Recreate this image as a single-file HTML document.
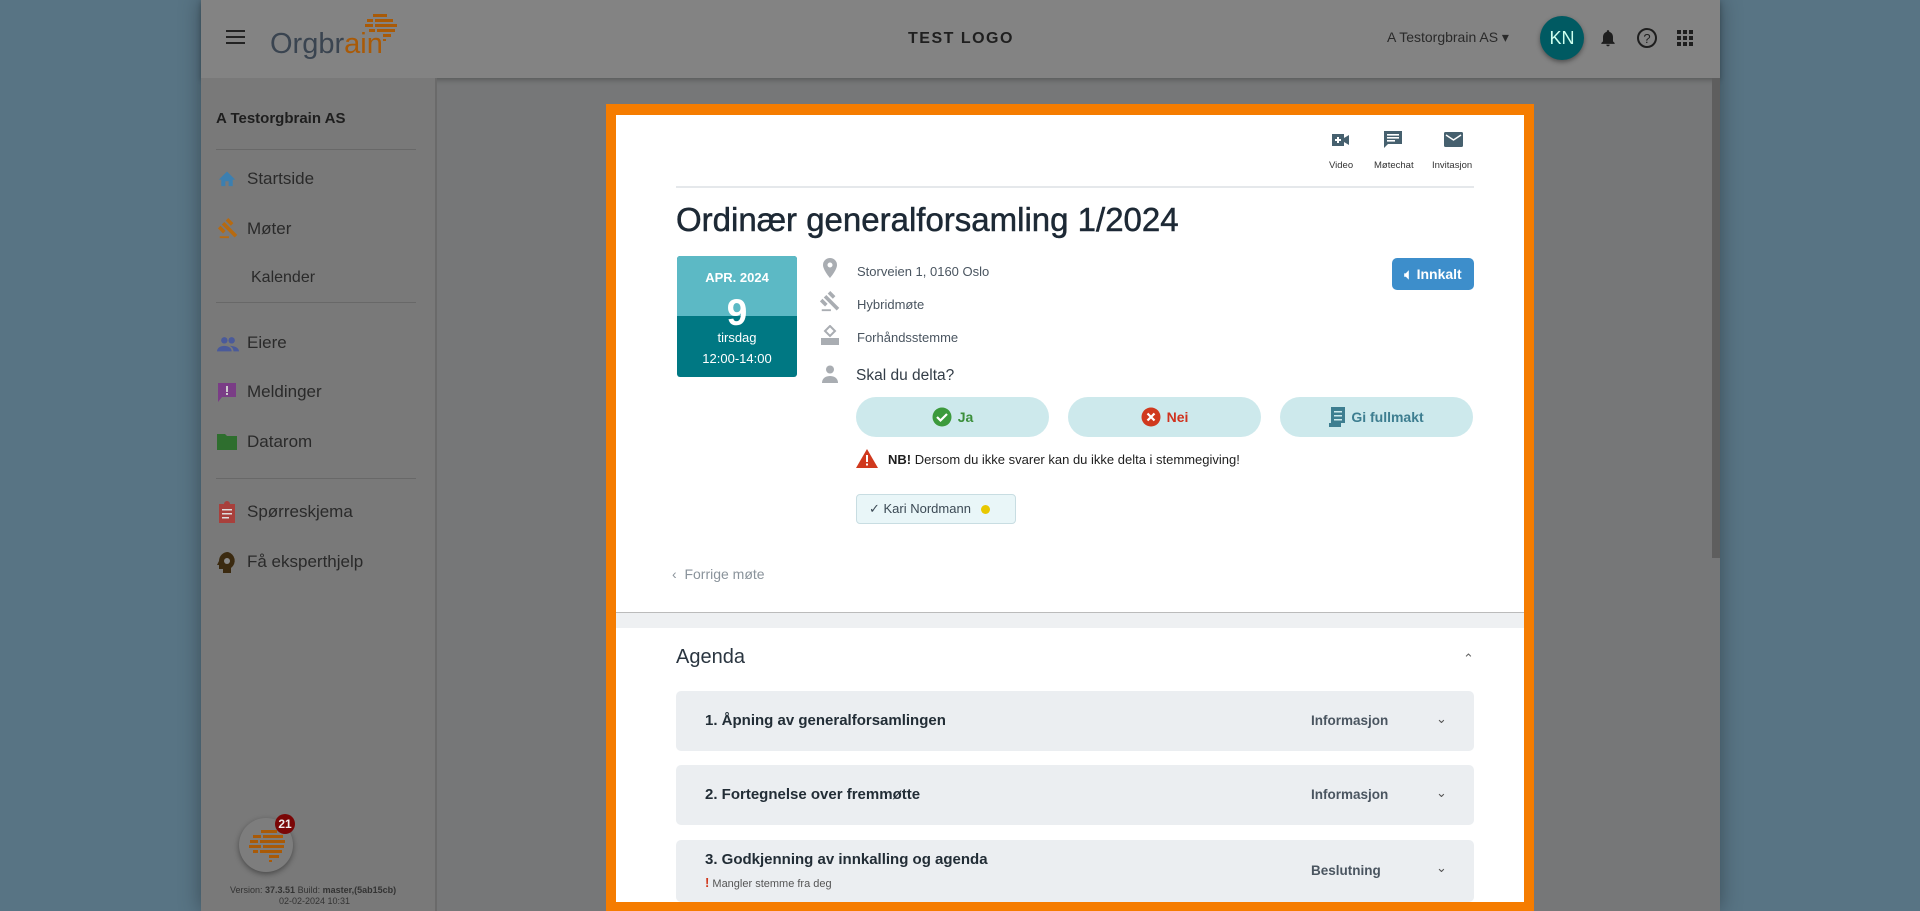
<!DOCTYPE html>
<html><head><meta charset="utf-8"><style>
*{box-sizing:border-box;margin:0;padding:0}
body{width:1920px;height:911px;overflow:hidden;background:#587484;font-family:"Liberation Sans",Arial,sans-serif;position:relative}
.abs{position:absolute}
#app{left:201px;top:0;width:1519px;height:911px;background:#767778;box-shadow:0 0 20px rgba(0,0,0,.35)}
#hdr{left:201px;top:0;width:1519px;height:78px;background:#838383;box-shadow:0 2px 5px rgba(0,0,0,.25)}
#side{left:201px;top:78px;width:236px;height:833px;background:#797979;border-right:2px solid #6a6a6a}
.si{position:absolute;left:46px;font-size:17px;color:#2a2a2a}
.ic{position:absolute;left:16px}
.dv{position:absolute;left:15px;width:200px;height:1px;background:#686868}
#frame{left:606px;top:104px;width:928px;height:807px;background:#f57c00}
#white{left:616px;top:115px;width:908px;height:787px;background:#fff}
.t{position:absolute;white-space:nowrap}
.btn{position:absolute;top:397px;height:40px;width:193px;border-radius:20px;background:#cde9ec;font-size:14px;font-weight:bold;display:flex;align-items:center;justify-content:center;gap:6px}
.ag{position:absolute;left:676px;width:798px;height:60px;background:#ebeef1;border-radius:5px}
.ag .n{position:absolute;left:29px;font-size:15px;font-weight:bold;color:#222d36}
.ag .k{position:absolute;left:635px;font-size:13.5px;font-weight:bold;color:#4a5560}
.ag .c{position:absolute;left:760px;font-size:13px;color:#555}
</style></head><body>
<div id="app" class="abs"></div>
<div id="hdr" class="abs">
 <div class="abs" style="left:25px;top:30px;width:19px;height:2px;background:#222;box-shadow:0 6px 0 #222,0 12px 0 #222"></div>
 <div class="t" style="left:69px;top:28px;font-size:29px;color:#3a4450">Orgbr<span style="color:#a95a07">ain</span></div>
 <svg class="abs" style="left:162px;top:12px" width="36" height="30"><g fill="#a95a07"><rect x="10" y="2" width="14" height="3"/><rect x="4" y="7" width="6" height="3"/><rect x="12" y="7" width="18" height="3"/><rect x="2" y="12" width="8" height="3"/><rect x="12" y="12" width="22" height="3"/><rect x="6" y="17" width="6" height="3"/><rect x="14" y="17" width="18" height="3"/><rect x="20" y="22" width="8" height="3"/><rect x="20" y="27" width="3" height="2"/></g></svg>
 <div class="t" style="left:707px;top:30px;font-size:16px;font-weight:bold;letter-spacing:1.5px;color:#1f1f1f">TEST LOGO</div>
 <div class="t" style="left:1186px;top:29px;font-size:14px;color:#2a2a2a">A Testorgbrain AS ▾</div>
 <div class="abs" style="left:1339px;top:16px;width:44px;height:44px;border-radius:50%;background:#005a62;color:#cfe;font-size:18px;display:flex;align-items:center;justify-content:center;box-shadow:0 2px 5px rgba(0,0,0,.4)">KN</div>
 <svg class="abs" style="left:1397px;top:27px" width="20" height="22" viewBox="0 0 24 24"><path fill="#1e1e1e" d="M12 22a2 2 0 0 0 2-2h-4a2 2 0 0 0 2 2zm6-6V11c0-3-1.6-5.6-4.5-6.3V4a1.5 1.5 0 0 0-3 0v.7C7.6 5.4 6 8 6 11v5l-2 2v1h16v-1z"/></svg>
 <svg class="abs" style="left:1434px;top:26px" width="24" height="24" viewBox="0 0 24 24"><circle cx="12" cy="12" r="9" fill="none" stroke="#1e1e1e" stroke-width="2"/><text x="12" y="17" font-size="13" text-anchor="middle" fill="#1e1e1e" font-family="Liberation Sans">?</text></svg>
 <svg class="abs" style="left:1476px;top:30px" width="17" height="17"><g fill="#1e1e1e"><rect x="0" y="0" width="4" height="4"/><rect x="6" y="0" width="4" height="4"/><rect x="12" y="0" width="4" height="4"/><rect x="0" y="6" width="4" height="4"/><rect x="6" y="6" width="4" height="4"/><rect x="12" y="6" width="4" height="4"/><rect x="0" y="12" width="4" height="4"/><rect x="6" y="12" width="4" height="4"/><rect x="12" y="12" width="4" height="4"/></g></svg>
</div>
<div class="abs" style="left:1712px;top:78px;width:8px;height:480px;background:#5e5e5e"></div>
<div id="side" class="abs">
 <div class="t" style="left:15px;top:32px;font-size:15px;font-weight:bold;color:#1e1e1e">A Testorgbrain AS</div>
 <div class="dv" style="top:71px"></div>
 <svg class="ic" style="top:91px" width="20" height="18" viewBox="0 0 24 22"><path fill="#3c7fb0" d="M10 21v-6h4v6h5v-8h3L12 3 2 13h3v8z"/></svg><div class="si" style="top:91px">Startside</div>
 <svg class="ic" style="top:139px" width="22" height="22" viewBox="0 0 24 24"><path fill="#b76a10" d="M3 21h10v2H3zM5.2 8.2l2.8-2.8 14.1 14.1-2.8 2.8zM12.3 1.1l5.6 5.6-2.8 2.8-5.6-5.6zM3.8 9.6l5.6 5.6-2.8 2.8L1 12.4z"/></svg><div class="si" style="top:141px">Møter</div>
 <div class="si" style="top:191px;left:50px;font-size:16px">Kalender</div>
 <div class="dv" style="top:224px"></div>
 <svg class="ic" style="top:258px" width="22" height="16" viewBox="0 0 24 16"><g fill="#4a5a9a"><circle cx="8" cy="4" r="3.5"/><circle cx="16" cy="4" r="3.5"/><path d="M0 16c0-4 4-6 8-6s8 2 8 6zM14 10c3 0 10 1 10 6h-6c0-3-2-5-4-6z"/></g></svg><div class="si" style="top:255px">Eiere</div>
 <svg class="ic" style="top:304px" width="20" height="21" viewBox="0 0 20 21"><path fill="#7a3d86" d="M1 1h18v14H5l-4 5z"/><rect x="9" y="4" width="2" height="6" fill="#ccc"/><rect x="9" y="11" width="2" height="2" fill="#ccc"/></svg><div class="si" style="top:304px">Meldinger</div>
 <svg class="ic" style="top:356px" width="20" height="16" viewBox="0 0 20 16"><path fill="#2e6e2e" d="M0 0h8l2 2h10v14H0z"/></svg><div class="si" style="top:354px">Datarom</div>
 <div class="dv" style="top:400px"></div>
 <svg class="ic" style="top:423px" width="20" height="22" viewBox="0 0 20 22"><path fill="#a8403c" d="M2 3h5a3 3 0 0 1 6 0h5v19H2z"/><g fill="#ddd"><rect x="5" y="8" width="10" height="1.5"/><rect x="5" y="12" width="10" height="1.5"/><rect x="5" y="16" width="7" height="1.5"/></g></svg><div class="si" style="top:424px">Spørreskjema</div>
 <svg class="ic" style="top:473px" width="22" height="22" viewBox="0 0 22 22"><path fill="#3b2a10" d="M11 1a9 9 0 0 0-9 9l-2 4h2v4h4v4h8v-5a9 9 0 0 0-3-16z"/><circle cx="10" cy="10" r="3" fill="#888"/></svg><div class="si" style="top:474px">Få eksperthjelp</div>
 <div class="abs" style="left:38px;top:740px;width:54px;height:54px;border-radius:50%;background:#7d7d7d;box-shadow:0 2px 6px rgba(0,0,0,.4)">
  <svg class="abs" style="left:8px;top:10px" width="40" height="36"><g fill="#a95a07"><rect x="14" y="2" width="16" height="3"/><rect x="6" y="7" width="8" height="3"/><rect x="16" y="7" width="20" height="3"/><rect x="3" y="12" width="8" height="3"/><rect x="13" y="12" width="25" height="3"/><rect x="2" y="17" width="12" height="3"/><rect x="16" y="17" width="21" height="3"/><rect x="6" y="22" width="5" height="3"/><rect x="13" y="22" width="22" height="3"/><rect x="22" y="27" width="10" height="3"/><rect x="22" y="32" width="3" height="2"/></g></svg>
 </div>
 <div class="abs" style="left:74px;top:736px;width:20px;height:20px;border-radius:50%;background:#7a0606;color:#eee;font-size:12px;font-weight:bold;text-align:center;line-height:20px">21</div>
 <div class="t" style="left:29px;top:807px;font-size:9px;color:#333">Version: <b>37.3.51</b> Build: <b>master,(5ab15cb)</b></div>
 <div class="t" style="left:78px;top:818px;font-size:9px;color:#333">02-02-2024 10:31</div>
</div>
<div id="frame" class="abs"></div>
<div id="white" class="abs"></div>
<div class="abs" style="left:616px;top:612px;width:908px;height:16px;background:#eef0f2;border-top:1px solid #bbb"></div>
<svg class="abs" style="left:1332px;top:133px" width="18" height="14" viewBox="0 0 18 14"><path fill="#46606e" d="M0 1h12v4l5-3v10l-5-3v4H0z"/><path fill="#fff" d="M5 4h2v2h2v2H7v2H5V8H3V6h2z"/></svg>
<svg class="abs" style="left:1384px;top:131px" width="18" height="18" viewBox="0 0 18 18"><path fill="#46606e" d="M0 0h18v13H4l-4 4z"/><g fill="#fff"><rect x="3" y="3" width="12" height="1.6"/><rect x="3" y="6" width="12" height="1.6"/><rect x="3" y="9" width="8" height="1.6"/></g></svg>
<svg class="abs" style="left:1444px;top:132px" width="19" height="15" viewBox="0 0 19 15"><rect width="19" height="15" rx="1.5" fill="#46606e"/><path d="M2 3l7.5 5L17 3" fill="none" stroke="#fff" stroke-width="1.5"/></svg>
<div class="t" style="left:1329px;top:160px;font-size:9.5px;color:#333">Video</div>
<div class="t" style="left:1374px;top:160px;font-size:9.5px;color:#333">Møtechat</div>
<div class="t" style="left:1432px;top:160px;font-size:9.5px;color:#333">Invitasjon</div>
<div class="abs" style="left:676px;top:186px;width:798px;height:2px;background:#e5e8eb"></div>
<div class="t" style="left:676px;top:201px;font-size:33px;font-weight:500;color:#1d2935;-webkit-text-stroke:0.5px #1d2935">Ordinær generalforsamling 1/2024</div>
<div class="abs" style="left:677px;top:256px;width:120px;height:121px;border-radius:3px;overflow:hidden;background:#007883">
 <div class="abs" style="left:0;top:0;width:120px;height:60px;background:#5cb9c5"></div>
 <div class="t" style="left:0;width:120px;text-align:center;top:14px;font-size:13px;font-weight:bold;color:#fff">APR. 2024</div>
 <div class="t" style="left:0;width:120px;text-align:center;top:36px;font-size:37px;font-weight:bold;color:#fff">9</div>
 <div class="t" style="left:0;width:120px;text-align:center;top:74px;font-size:13px;color:#fff">tirsdag</div>
 <div class="t" style="left:0;width:120px;text-align:center;top:95px;font-size:13px;color:#fff">12:00-14:00</div>
</div>
<svg class="abs" style="left:823px;top:258px" width="14" height="20" viewBox="0 0 14 20"><path fill="#a9adb2" d="M7 0a7 7 0 0 0-7 7c0 5 7 13 7 13s7-8 7-13a7 7 0 0 0-7-7zm0 9.5A2.5 2.5 0 1 1 7 4.5a2.5 2.5 0 0 1 0 5z"/></svg>
<svg class="abs" style="left:819px;top:290px" width="22" height="22" viewBox="0 0 24 24"><path fill="#a9adb2" d="M3 21h10v2H3zM5.2 8.2l2.8-2.8 14.1 14.1-2.8 2.8zM12.3 1.1l5.6 5.6-2.8 2.8-5.6-5.6zM3.8 9.6l5.6 5.6-2.8 2.8L1 12.4z"/></svg>
<svg class="abs" style="left:821px;top:325px" width="18" height="20" viewBox="0 0 18 20"><path fill="none" stroke="#a9adb2" stroke-width="2" d="M9 1l5 5-5 5-5-5z"/><path fill="#a9adb2" d="M0 13h18v7H0z"/></svg>
<svg class="abs" style="left:822px;top:365px" width="16" height="18" viewBox="0 0 16 18"><circle cx="8" cy="4.5" r="4" fill="#a9adb2"/><path fill="#a9adb2" d="M0 18c0-5 4-7 8-7s8 2 8 7z"/></svg>
<div class="t" style="left:857px;top:264px;font-size:13px;color:#4a5560">Storveien 1, 0160 Oslo</div>
<div class="t" style="left:857px;top:297px;font-size:13px;color:#4a5560">Hybridmøte</div>
<div class="t" style="left:857px;top:330px;font-size:13px;color:#4a5560">Forhåndsstemme</div>
<div class="t" style="left:856px;top:367px;font-size:15.5px;color:#333d47">Skal du delta?</div>
<div class="abs" style="left:1392px;top:258px;width:82px;height:32px;border-radius:5px;background:#3d8ecb;color:#fff;font-size:14px;font-weight:bold;display:flex;align-items:center;justify-content:center">🔈︎ Innkalt</div>
<div class="btn" style="left:856px;color:#3b8f3b"><svg width="20" height="20"><circle cx="10" cy="10" r="9.5" fill="#3c9a3c"/><path d="M5 10l3.5 3.5L15 7" stroke="#fff" stroke-width="2.2" fill="none"/></svg>Ja</div>
<div class="btn" style="left:1068px;color:#d0321e"><svg width="20" height="20"><circle cx="10" cy="10" r="9.5" fill="#d0391e"/><path d="M6.5 6.5l7 7M13.5 6.5l-7 7" stroke="#fff" stroke-width="2.2"/></svg>Nei</div>
<div class="btn" style="left:1280px;color:#3d7e90"><svg width="16" height="20" viewBox="0 0 16 20"><path fill="#3d7e90" d="M2 0h14v16H2zM0 16h12v4H0z"/><g fill="#cde9ec"><rect x="5" y="4" width="8" height="1.5"/><rect x="5" y="8" width="8" height="1.5"/><rect x="5" y="12" width="8" height="1.5"/></g></svg>Gi fullmakt</div>
<svg class="abs" style="left:856px;top:449px" width="22" height="19" viewBox="0 0 22 19"><path fill="#d0391e" d="M11 0l11 19H0z"/><rect x="10" y="6" width="2" height="7" fill="#fff"/><rect x="10" y="14.5" width="2" height="2" fill="#fff"/></svg>
<div class="t" style="left:888px;top:452px;font-size:13px;color:#1e1e1e"><b>NB!</b> Dersom du ikke svarer kan du ikke delta i stemmegiving!</div>
<div class="abs" style="left:856px;top:494px;width:160px;height:30px;border:1px solid #c8dde2;border-radius:4px;background:#e9f6f8;font-size:13px;color:#3c4a55;display:flex;align-items:center;padding-left:12px;gap:6px">✓ Kari Nordmann <span style="display:inline-block;width:9px;height:9px;border-radius:50%;background:#e8c800;margin-left:4px"></span></div>
<div class="t" style="left:672px;top:566px;font-size:14px;color:#8a939b">‹&nbsp; Forrige møte</div>
<div class="t" style="left:676px;top:646px;font-size:20px;color:#2a3540">Agenda</div>
<div class="t" style="left:1463px;top:651px;font-size:13px;color:#666">⌃</div>
<div class="ag" style="top:691px"><div class="n" style="top:21px">1. Åpning av generalforsamlingen</div><div class="k" style="top:22px">Informasjon</div><div class="c" style="top:20px">⌄</div></div>
<div class="ag" style="top:765px"><div class="n" style="top:21px">2. Fortegnelse over fremmøtte</div><div class="k" style="top:22px">Informasjon</div><div class="c" style="top:20px">⌄</div></div>
<div class="ag" style="top:840px;height:62px"><div class="n" style="top:11px">3. Godkjenning av innkalling og agenda</div><div class="t" style="left:29px;top:35px;font-size:11px;color:#555"><b style="color:#d0391e;font-size:13px">!</b> Mangler stemme fra deg</div><div class="k" style="top:23px">Beslutning</div><div class="c" style="top:20px">⌄</div></div>
<div class="abs" style="left:606px;top:902px;width:928px;height:9px;background:#f57c00"></div>
</body></html>
